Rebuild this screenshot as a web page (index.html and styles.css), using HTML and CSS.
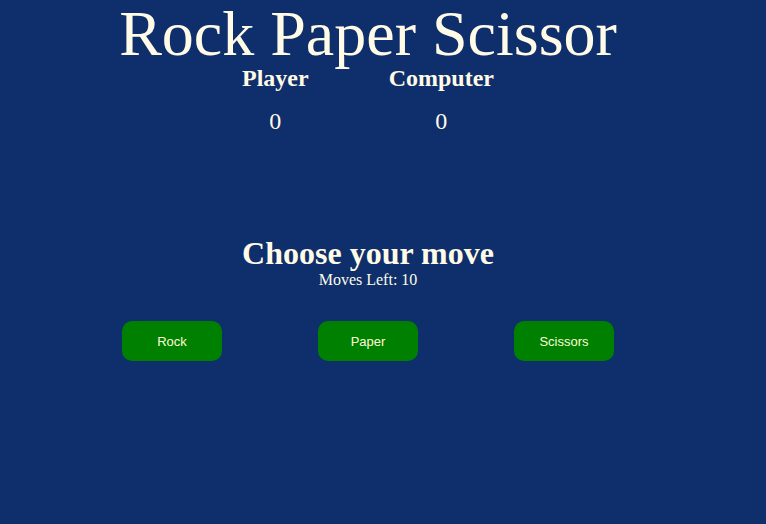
FILE: index.html
```html
<!DOCTYPE html>
<html>
<head>
<meta charset="utf-8">
<link rel="stylesheet" href="styles.css">
</head>
<body>
<div class="game">
  <h1 class="title">Rock Paper Scissor</h1>
  <div class="scores">
    <div class="score">
      <div class="label">Player</div>
      <div class="value">0</div>
    </div>
    <div class="score">
      <div class="label">Computer</div>
      <div class="value">0</div>
    </div>
  </div>
  <div class="choose">
    <h2 class="prompt">Choose your move</h2>
    <div class="moves">Moves Left: 10</div>
  </div>
  <div class="buttons">
    <button class="btn">Rock</button>
    <button class="btn">Paper</button>
    <button class="btn">Scissors</button>
  </div>
</div>
</body>
</html>
```
FILE: styles.css
```css
html, body {
  margin: 0;
  padding: 0;
  background: #0f2e6c;
  height: 100%;
}
body {
  font-family: "Liberation Serif", "Times New Roman", serif;
  color: #fffbe6;
}
.game {
  width: 720px;
  margin-left: 8px;
  display: flex;
  flex-direction: column;
  align-items: center;
}
.title {
  margin: 0;
  font-size: 64px;
  font-weight: normal;
  line-height: 68px;
}
.scores {
  display: flex;
  gap: 80px;
  justify-content: center;
}
.score {
  display: flex;
  flex-direction: column;
  align-items: center;
}
.label {
  font-size: 24px;
  font-weight: bold;
  line-height: 20px;
}
.value {
  font-size: 24px;
  margin-top: 19px;
  line-height: 28px;
}
.choose {
  margin-top: 100px;
  display: flex;
  flex-direction: column;
  align-items: center;
}
.prompt {
  margin: 0;
  font-size: 32px;
  font-weight: bold;
  line-height: 36px;
}
.moves {
  font-size: 16px;
  line-height: 18px;
}
.buttons {
  margin-top: 32px;
  display: flex;
  gap: 96px;
  justify-content: center;
}
.btn {
  width: 100px;
  height: 40px;
  border: none;
  border-radius: 10px;
  background: #008000;
  color: #fffbd6;
  font-family: "Liberation Sans", Arial, sans-serif;
  font-size: 13px;
  padding: 0;
}
```
